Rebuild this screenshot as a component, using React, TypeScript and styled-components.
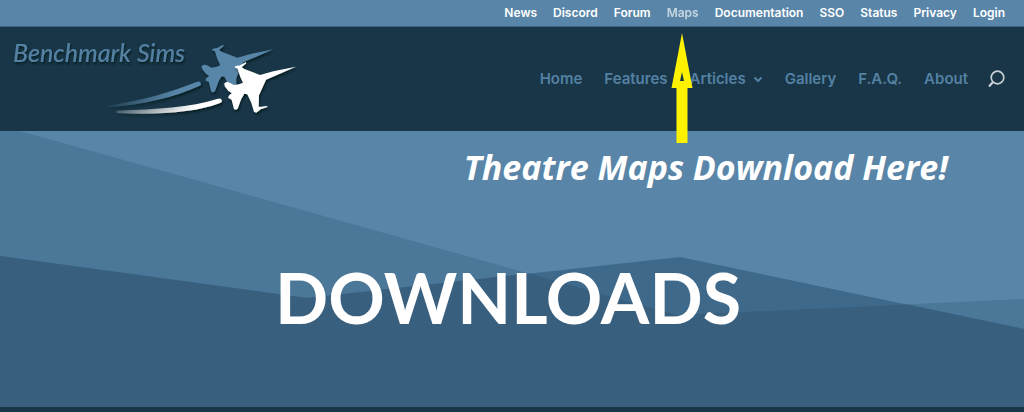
import React from "react";
import styled, { createGlobalStyle } from "styled-components";

const color = {
  sky: "#5986a8",
  navy: "#183647",
  link: "#5481a3",
  slope: "#4b7898",
  ridge: "#3f698a",
  ground: "#395f7f",
};

const GlobalStyle = createGlobalStyle`
  *, *::before, *::after { box-sizing: border-box; }
  body {
    margin: 0;
    background: ${color.navy};
    font-family: Inter, "Liberation Sans", sans-serif;
  }
`;

const TopBar = styled.nav`
  display: flex;
  justify-content: flex-end;
  gap: 16px;
  height: 27px;
  padding: 0 19px 0 12px;
  background: ${color.sky};
  border-bottom: 1px solid #3c6480;
`;

const TopItem = styled.div`
  position: relative;
  display: flex;
`;

const TopLink = styled.a<{ $current?: boolean }>`
  color: #fff;
  opacity: ${(p) => (p.$current ? 0.65 : 1)};
  font-size: 12px;
  font-weight: 600;
  line-height: 26px;
  text-decoration: none;
`;

const Pointer = styled.svg`
  position: absolute;
  z-index: 2;
  top: 33px;
  left: 50%;
  margin-left: -12px;
  pointer-events: none;
`;

const Header = styled.header`
  display: flex;
  justify-content: space-between;
  align-items: center;
  height: 104px;
  padding: 0 19px 0 8px;
  background: ${color.navy};
`;

const LogoLink = styled.a`
  display: block;
  flex: none;
`;

const LogoSvg = styled.svg`
  display: block;
  overflow: visible;
`;

const Wordmark = styled.text`
  font-family: Lato, sans-serif;
  font-size: 25px;
  font-style: italic;
  font-weight: 500;
`;

const MainNav = styled.nav`
  display: flex;
  align-items: center;
  gap: 22px;
`;

const MainLink = styled.a`
  display: flex;
  align-items: center;
  gap: 7px;
  color: ${color.link};
  font-size: 15px;
  font-weight: 600;
  line-height: 20px;
  text-decoration: none;
`;

const SearchButton = styled.button`
  display: block;
  margin-left: -2px;
  padding: 0;
  border: 0;
  background: none;
  color: #c9d0d5;
  line-height: 0;
`;

const Hero = styled.main`
  position: relative;
  display: flex;
  flex-direction: column;
  height: 276px;
  padding: 12px 8px 0 0;
  background: ${color.sky};
`;

const Mountains = styled.svg`
  position: absolute;
  inset: 0;
  width: 100%;
  height: 100%;
`;

const Callout = styled.p`
  position: relative;
  margin: 0;
  padding-right: 68px;
  color: #fff;
  font-family: "Open Sans", "Noto Sans", sans-serif;
  font-size: 34px;
  font-style: italic;
  font-weight: 700;
  line-height: 48px;
  text-align: right;
`;

const Title = styled.h1`
  position: relative;
  margin: 66px 0 0;
  color: #fff;
  font-family: Lato, sans-serif;
  font-size: 70px;
  font-weight: 700;
  line-height: 80px;
  text-align: center;
`;

const topLinks = ["News", "Discord", "Forum", "Maps", "Documentation", "SSO", "Status", "Privacy", "Login"];
const mainLinks = ["Home", "Features", "Articles", "Gallery", "F.A.Q.", "About"];

const jet =
  "M318 92 L228 131 L207 178 L206 213 L231 210 L233 213 L212 220 L199 230 L192 227 L184 200 L172 175 L163 173 L154 188 L143 218 Q137 223 132 219 L129 208 L125 191 L114 185 L118 177 L126 172 Q114 166 110 158 Q100 148 104 141 Q110 136 119 140 L132 147 L147 145 L159 140 L150 121 L143 98 L133 94 Q137 88 148 89 L168 78 L169 82 L155 94 L163 99 L210 117 L250 106 Z";

function Logo() {
  return (
    <LogoSvg width="292" height="80" viewBox="8 38 292 80" role="img" aria-label="Benchmark Sims">
      <defs>
        <linearGradient id="blueTrail">
          <stop offset="0" stopColor="#5986a8" stopOpacity="0.15" />
          <stop offset="0.75" stopColor="#5986a8" />
        </linearGradient>
        <linearGradient id="whiteTrail">
          <stop offset="0" stopColor="#fff" stopOpacity="0.2" />
          <stop offset="0.75" stopColor="#fff" />
        </linearGradient>
        <filter id="shadow" x="-10%" y="-20%" width="120%" height="150%">
          <feDropShadow dx="1" dy="2" stdDeviation="1" floodColor="#06131c" floodOpacity="0.8" />
        </filter>
      </defs>
      <g filter="url(#shadow)">
        <Wordmark x="13" y="61" fill="#5481a3">Benchmark Sims</Wordmark>
      </g>
      <g filter="url(#shadow)">
        <g transform="translate(0 25) scale(0.33333)">
          <path fill="url(#blueTrail)" d="M325 239 C430 222 510 199 592 167 Q602 164 603 174 Q602 179 596 181 C520 214 430 238 325 243 Z" />
          <path fill="url(#whiteTrail)" d="M350 254 C470 249 570 245 654 218 Q664 215 666 224 Q666 229 658 232 C590 259 470 268 350 261 Z" />
          <path fill="#5986a8" transform="translate(502 -22)" d={jet} />
        </g>
      </g>
      <g filter="url(#shadow)">
        <path fill="#fff" transform="translate(190 35) scale(0.33333)" d={jet} />
      </g>
    </LogoSvg>
  );
}

export default function App() {
  return (
    <>
      <GlobalStyle />
      <TopBar aria-label="Secondary">
        {topLinks.map((label) => (
          <TopItem key={label}>
            <TopLink href="#" $current={label === "Maps"}>{label}</TopLink>
            {label === "Maps" && (
              <Pointer width="22" height="110" viewBox="0 0 22 110" aria-hidden="true">
                <path
                  fill="#fff200"
                  fillRule="evenodd"
                  d="M11 0 L21.5 55 H16.5 V110 H5.5 V55 H0.5 Z M11 39 L9 48 H13 Z"
                />
              </Pointer>
            )}
          </TopItem>
        ))}
      </TopBar>
      <Header>
        <LogoLink href="#"><Logo /></LogoLink>
        <MainNav aria-label="Primary">
          {mainLinks.map((label) => (
            <MainLink href="#" key={label}>
              {label}
              {label === "Articles" && (
                <svg width="10" height="8" viewBox="0 0 10 8" fill="none" stroke="currentColor" strokeWidth="2" aria-hidden="true">
                  <path d="M1.5 2.5 L5 6 L8.500 2.5" />
                </svg>
              )}
            </MainLink>
          ))}
          <SearchButton type="button" aria-label="Search">
            <svg width="17" height="18" viewBox="0 0 17 18" fill="none" stroke="currentColor" aria-hidden="true">
              <circle cx="9.500" cy="7.500" r="6.300" strokeWidth="1.700" />
              <path d="M5 12 L1 16.500" strokeWidth="2.200" />
            </svg>
          </SearchButton>
        </MainNav>
      </Header>
      <Hero>
        <Mountains viewBox="0 131 1024 276" preserveAspectRatio="none" aria-hidden="true">
          <path fill={color.slope} d="M0 131 H20 L677 315 L1024 299 V407 H0 Z" />
          <path fill={color.ridge} d="M0 256 L307 298 L680 257 L1024 329 V407 H0 Z" />
          <path fill={color.ground} d="M0 256 L307 298 L529 273.500 L677 315 L908 304.500 L1024 329 V407 H0 Z" />
        </Mountains>
        <Callout>Theatre Maps Download Here!</Callout>
        <Title>DOWNLOADS</Title>
      </Hero>
    </>
  );
}
